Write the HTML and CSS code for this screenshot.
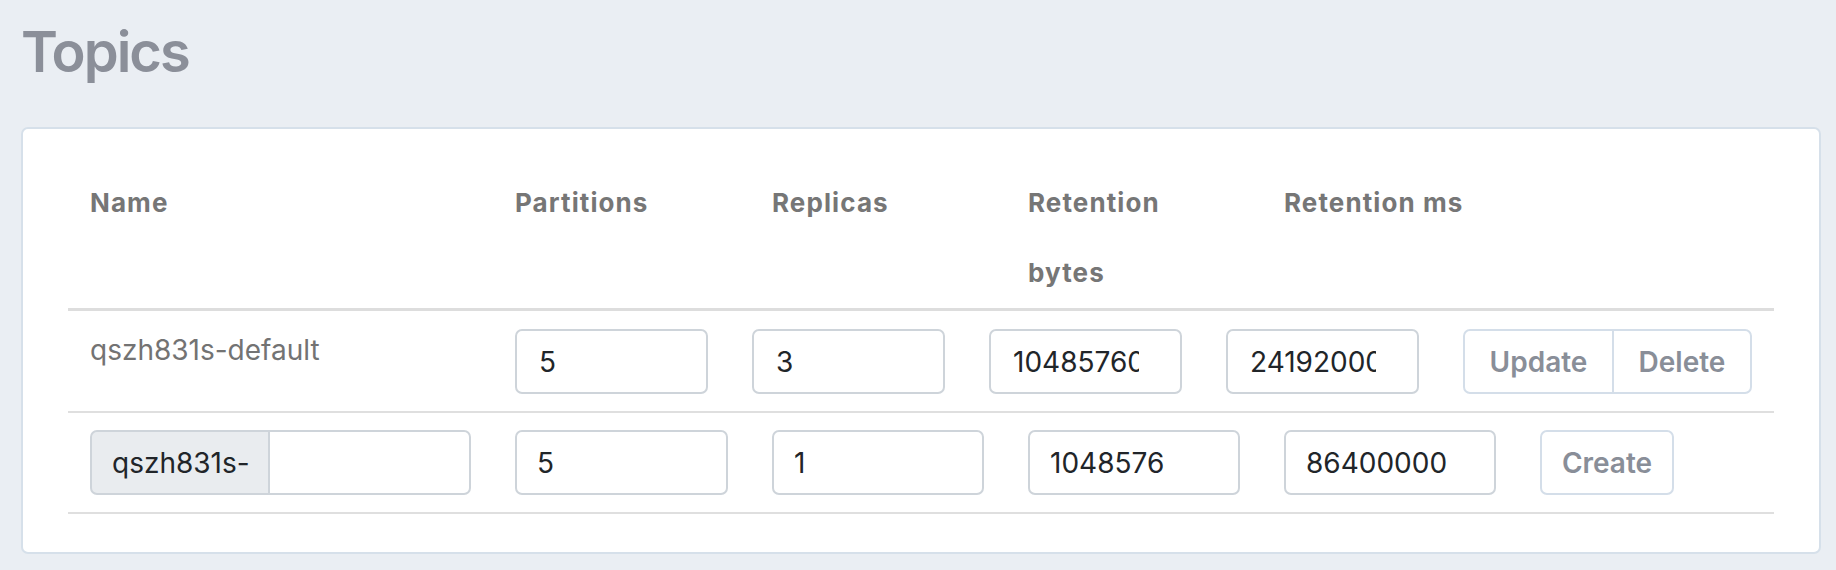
FILE: index.html
```html
<!DOCTYPE html>
<html lang="en">
<head>
<meta charset="utf-8">
<title>Topics</title>
<link rel="stylesheet" href="styles.css">
</head>
<body>
<main class="page">
  <h1 class="title">Topics</h1>
  <section class="card">
    <table class="topics">
      <colgroup>
        <col class="col-name">
        <col class="col-first">
        <col class="col-num">
        <col class="col-num">
        <col class="col-num">
        <col class="col-num">
      </colgroup>
      <thead>
        <tr>
          <th>Name</th>
          <th>Partitions</th>
          <th>Replicas</th>
          <th>Retention<br>bytes</th>
          <th>Retention ms</th>
          <th></th>
        </tr>
      </thead>
      <tbody>
        <tr>
          <td class="topic-name">qszh831s-default</td>
          <td colspan="5">
            <form class="edit-row">
              <input class="field field-edit" type="text" value="5">
              <input class="field field-edit" type="text" value="3">
              <input class="field field-edit" type="text" value="10485760">
              <input class="field field-edit" type="text" value="2419200000">
              <div class="btn-group">
                <button type="button" class="btn btn-update">Update</button>
                <button type="button" class="btn btn-delete">Delete</button>
              </div>
            </form>
          </td>
        </tr>
        <tr>
          <td>
            <div class="input-group">
              <span class="addon">qszh831s-</span>
              <input class="field field-grouped" type="text" value="">
            </div>
          </td>
          <td><input class="field field-new" type="text" value="5"></td>
          <td><input class="field field-new" type="text" value="1"></td>
          <td><input class="field field-new" type="text" value="1048576"></td>
          <td><input class="field field-new" type="text" value="86400000"></td>
          <td><button type="button" class="btn btn-create">Create</button></td>
        </tr>
      </tbody>
    </table>
  </section>
</main>
</body>
</html>
```

FILE: styles.css
```css
* {
  box-sizing: border-box;
}

html, body {
  margin: 0;
  background: #eaeef3;
}

body {
  font-family: Inter, "Noto Sans", sans-serif;
}

.page {
  padding: 18px 15px 0 21px;
}

.title {
  margin: 0 0 41px;
  font-size: 56px;
  line-height: 68px;
  font-weight: 600;
  letter-spacing: -2px;
  color: #8b8f99;
}

.card {
  width: 1800px;
  background: #ffffff;
  border: 2px solid #d6e0ea;
  border-radius: 7px;
  padding: 39px 45px 38px;
}

.topics {
  width: 1706px;
  table-layout: fixed;
  border-collapse: collapse;
}

.col-name { width: 425px; }
.col-first { width: 257px; }
.col-num { width: 256px; }

.topics th {
  text-align: left;
  vertical-align: top;
  padding: 0 22px;
  font-size: 26px;
  line-height: 70px;
  font-weight: 700;
  letter-spacing: 1.1px;
  color: #767676;
  border-bottom: 3px solid #dddddd;
}

.topics td {
  vertical-align: top;
  padding: 17px 22px;
  border-bottom: 2px solid #dfdfdf;
}

.topics tbody tr:first-child td {
  padding-top: 18px;
}

.topic-name {
  font-size: 28px;
  line-height: 42px;
  color: #737373;
}

.edit-row {
  display: flex;
  gap: 44px;
  margin: 0;
}

.field {
  display: block;
  height: 65px;
  margin: 0;
  border: 2px solid #ced4da;
  border-radius: 7px;
  padding: 0 20px;
  font-family: Inter, "Noto Sans", sans-serif;
  font-size: 28px;
  color: #212529;
  background: #ffffff;
  outline: none;
}

.field-edit {
  width: 193px;
  padding-left: 22px;
  padding-right: 41px;
}

.field-new {
  width: 100%;
}

.input-group {
  display: flex;
  width: 100%;
  height: 65px;
}

.addon {
  display: flex;
  align-items: center;
  width: 180px;
  padding: 0 20px;
  font-size: 28px;
  color: #212529;
  background: #e9ecef;
  border: 2px solid #ced4da;
  border-radius: 7px 0 0 7px;
}

.field-grouped {
  flex: 1;
  min-width: 0;
  border-left: 0;
  border-radius: 0 7px 7px 0;
}

.btn-group {
  display: flex;
}

.btn {
  height: 65px;
  margin: 0;
  font-family: Inter, "Noto Sans", sans-serif;
  font-size: 28px;
  font-weight: 600;
  color: #898e98;
  background: #ffffff;
  border: 2px solid #d4dee9;
  border-radius: 7px;
}

.btn-update {
  width: 151px;
  border-radius: 7px 0 0 7px;
}

.btn-delete {
  width: 140px;
  margin-left: -2px;
  border-radius: 0 7px 7px 0;
}

.btn-create {
  display: block;
  width: 134px;
}
```
